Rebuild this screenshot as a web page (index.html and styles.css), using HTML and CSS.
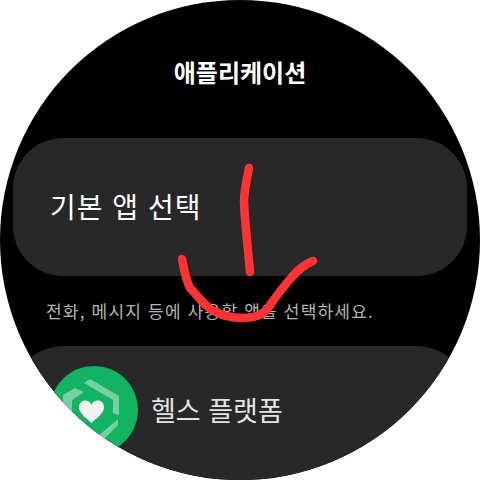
FILE: index.html
```html
<!DOCTYPE html>
<html lang="ko">
<head>
<meta charset="utf-8">
<title>애플리케이션</title>
<link rel="stylesheet" href="styles.css">
</head>
<body>
<main class="watch">
  <h1 class="title">애플리케이션</h1>
  <section class="card card-main"><span class="card-label">기본 앱 선택</span></section>
  <p class="hint">전화, 메시지 등에 사용할 앱을 선택하세요.</p>
  <section class="card card-app">
    <svg class="app-icon" viewBox="0 0 88 88" aria-hidden="true">
      <circle cx="44" cy="44" r="44" fill="#12b361"/>
      <path d="M34 17 L40 13 L69 30 L69 49 L63 47 L63 34 Z" fill="#74d0a2"/>
      <path d="M13 29 L25 22 L34 26 L22 34 L22 52 L13 48 Z" fill="#74d0a2"/>
      <path d="M68 53 L68 59 L52 75 L47 71 Z" fill="#74d0a2"/>
      <path d="M41.5 57 C35 51 29 47 29 41 C29 34 38 32 41.5 38.5 C45 32 54 34 54 41 C54 47 48 51 41.5 57 Z" fill="#f1f1f1"/>
    </svg>
    <span class="app-label">헬스 플랫폼</span>
  </section>
  <svg class="scribble" viewBox="0 0 480 480" aria-hidden="true">
    <path d="M249 168 C247 178 244 190 244 202 C245 225 248 248 250 272" />
    <path d="M182 259 C184 270 186 280 190 288 C197 295 203 304 212 310 C222 316 232 318 243 318 C255 318 263 315 268 308 C275 298 280 291 286 284 C292 277 300 266 313 261" />
  </svg>
</main>
</body>
</html>
```
FILE: styles.css
```css
* { box-sizing: border-box; }
html, body { margin: 0; padding: 0; background: #fff; }
body { width: 480px; height: 480px; overflow: hidden; font-family: "Noto Sans CJK KR", "Noto Sans", sans-serif; }
.watch {
  position: relative;
  width: 480px;
  height: 480px;
  border-radius: 50%;
  overflow: hidden;
  background: #000;
  display: flex;
  flex-direction: column;
  align-items: center;
}
.title {
  margin: 55px 0 0;
  height: 34px;
  font-size: 24px;
  line-height: 34px;
  font-weight: 700;
  color: #fff;
}
.card { background: #282828; width: 454px; flex: none; display: flex; align-items: center; }
.card-main { margin-top: 49px; height: 138px; border-radius: 50px; padding: 0 0 2px 37px; }
.card-label { font-size: 28px; font-weight: 400; color: #fff; letter-spacing: 1px; }
.hint {
  align-self: flex-start;
  margin: 19px 0 0 46px;
  height: 32px;
  font-size: 17px;
  line-height: 32px;
  color: #b4b4b4;
  letter-spacing: 1.2px;
  white-space: nowrap;
}
.card-app { margin-top: 19px; height: 138px; border-radius: 50px; padding: 20px 0 0 37px; gap: 13px; align-items: flex-start; }
.app-icon { width: 88px; height: 88px; flex: none; }
.app-label { font-size: 27px; line-height: 40px; margin-top: 24px; color: #e4e4e4; letter-spacing: 0; }
.scribble { position: absolute; inset: 0; width: 480px; height: 480px; fill: none; stroke: #ff3333; stroke-width: 8.5; stroke-linecap: round; stroke-linejoin: round; }
```
